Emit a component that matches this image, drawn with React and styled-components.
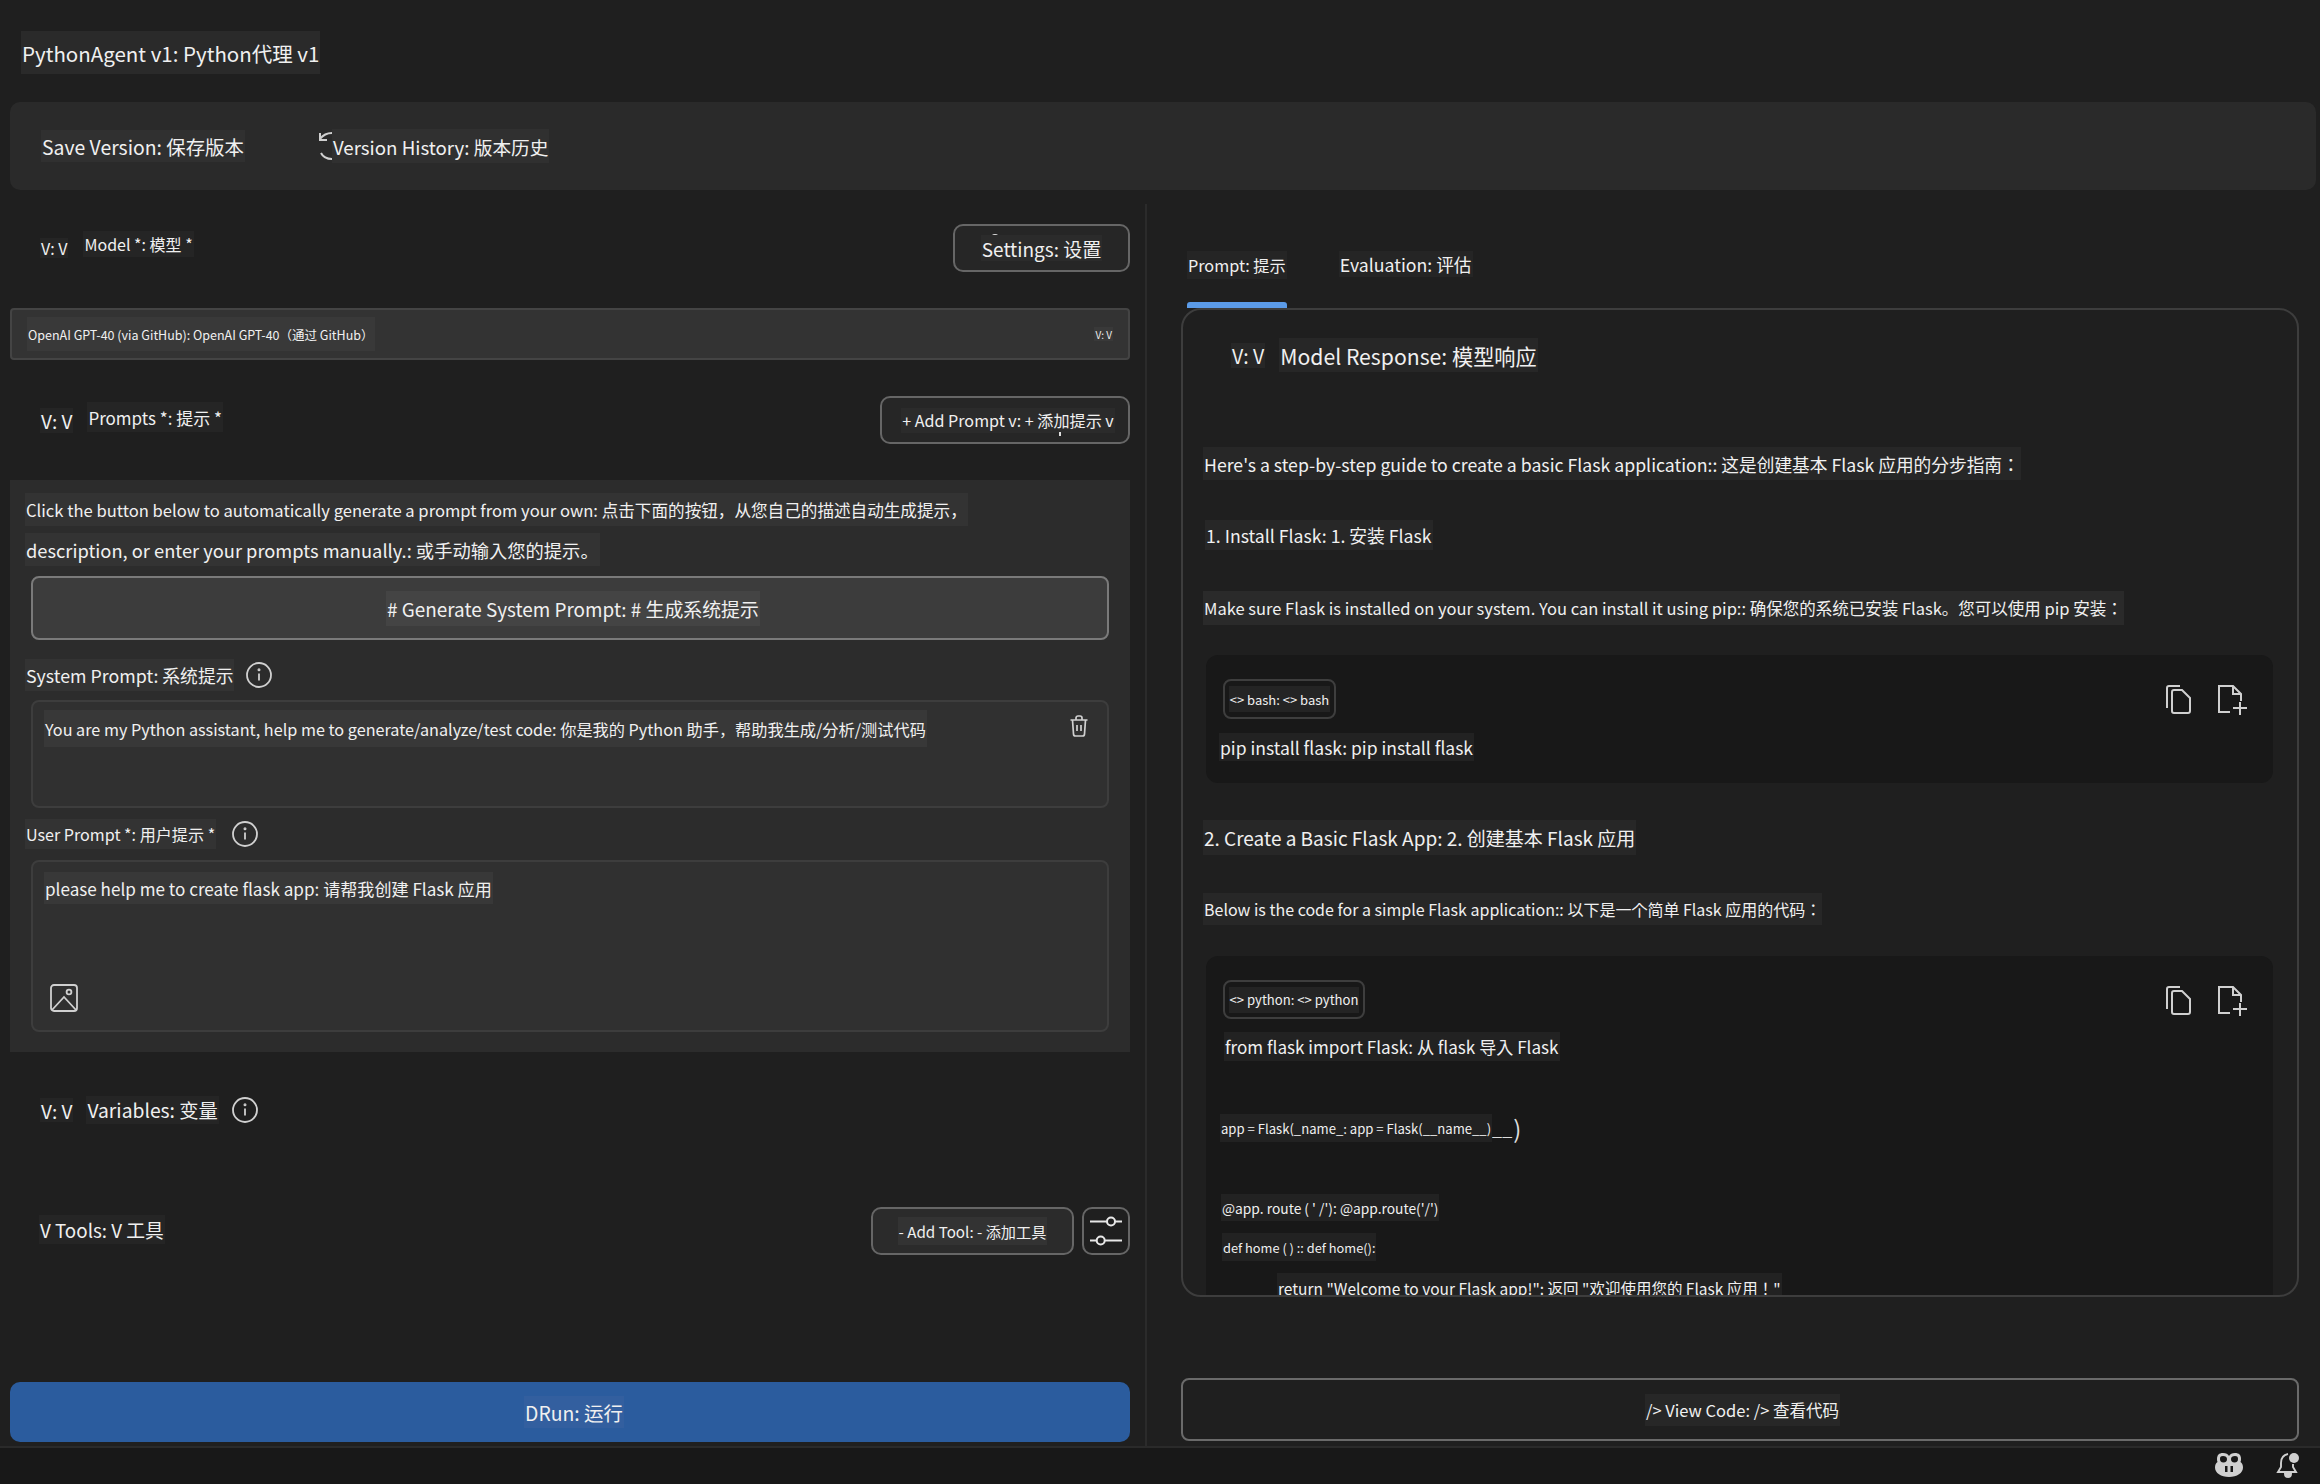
import React from "react";
import styled, { createGlobalStyle } from "styled-components";

const Global = createGlobalStyle`
  html, body { margin: 0; padding: 0; background: #1f1f1f; }
  * { box-sizing: border-box; }
  body { font-family: "Noto Sans CJK JP", "Noto Sans", sans-serif; color: #e6e6e6; }
`;

const Page = styled.div`
  width: 2320px; height: 1484px; display: flex; flex-direction: column; overflow: hidden; background: #1f1f1f;
`;
const Hl = styled.span`
  display: inline-flex; align-items: center; white-space: nowrap; flex: none; position: relative;
  height: ${p => p.$h || 30}px; font-size: ${p => p.$s || 18}px; background: ${p => p.$bg || "#292929"};
  padding: 0 1px; color: #f0f0f0; margin-bottom: ${p => p.$up || 0}px;
`;
const Header = styled.header`
  height: 102px; padding: 31px 0 0 21px; flex: none;
`;
const Toolbar = styled.div`
  flex: none; height: 88px; margin: 0 4px 0 10px; padding-left: 31px; background: #2a2a2a; border-radius: 10px;
  display: flex; align-items: center;
`;
const HistoryGroup = styled.div`
  display: flex; align-items: center; margin-left: 72px;
`;
const Main = styled.main`
  flex: none; margin-top: 14px; display: flex; height: 1242px;
`;
const LeftCol = styled.section`
  width: 1147px; flex: none; border-right: 2px solid #2b2b2b; padding: 20px 15px 4px 10px; display: flex; flex-direction: column;
`;
const RightCol = styled.section`
  flex: 1; padding: 0 21px 0 34px; display: flex; flex-direction: column;
`;
const Row = styled.div`
  display: flex; align-items: center; justify-content: space-between; height: 48px; flex: none; padding-left: 30px;
  margin-top: ${p => p.$mt || 0}px;
`;
const RowLeft = styled.div`
  display: flex; align-items: center; gap: ${p => p.$gap ?? 14}px;
`;
const RowRight = styled.div`
  display: flex; gap: 8px;
`;
const OutlineBtn = styled.button`
  height: 48px; width: ${p => p.$w}px; border: 2.5px solid #666; border-radius: 10px; background: ${p => p.$bg || "#262626"};
  display: flex; align-items: center; justify-content: center; padding: 0 0 0 ${p => p.$pl || 0}px; color: inherit; font: inherit; position: relative;
`;
const Peek = styled.span`
  position: absolute; left: ${p => p.$x}px; top: ${p => p.$y}px; width: 8px; height: 5px;
  border-top: 2px solid #ddd; border-left: 2px solid #ddd; border-right: 2px solid #ddd; border-radius: 4px 4px 0 0;
`;
const Dot = styled.span`
  position: absolute; left: 177px; bottom: 6px; width: 2px; height: 4px; background: #ddd;
`;
const SelectBox = styled.div`
  margin-top: 36px; height: 52px; flex: none; background: #333; border: 2px solid #444; border-radius: 4px;
  display: flex; align-items: center; justify-content: space-between; padding: 0 15px 0 15px;
`;
const PromptPanel = styled.div`
  margin-top: 36px; height: 572px; flex: none; background: #2c2c2c; padding: 13px 0 0 15px;
  display: flex; flex-direction: column; align-items: flex-start;
`;
const GenerateBtn = styled.button`
  margin: 10px 0 0 6px; width: 1078px; height: 64px; flex: none; background: #3c3c3c; border: 2.5px solid #7a7a7a; border-radius: 8px;
  display: flex; align-items: center; justify-content: center; color: inherit; font: inherit; padding: 0 0 0 6px;
`;
const LabelRow = styled.div`
  display: flex; align-items: center; gap: ${p => p.$gap}px; margin-top: ${p => p.$mt}px;
`;
const TextBox = styled.div`
  margin: ${p => p.$mt}px 0 0 6px; width: 1078px; height: ${p => p.$h}px; flex: none; background: #303030;
  border: 2px solid #3d3d3d; border-radius: 8px; padding: ${p => p.$pt}px 16px 0 11px; position: relative;
`;
const Overlay = styled.div`
  position: absolute; right: ${p => p.$r}px; ${p => p.$top !== undefined ? `top:${p.$top}px;` : ""} ${p => p.$bottom !== undefined ? `bottom:${p.$bottom}px;` : ""} display: flex;
`;
const RunBtn = styled.button`
  margin-top: auto; height: 60px; flex: none; background: #2b5c9e; border: 0; border-radius: 10px;
  display: flex; align-items: center; justify-content: center; color: inherit; font: inherit; padding: 0 0 0 8px; width: 1120px;
`;
const Tabs = styled.div`
  height: 104px; flex: none; display: flex; align-items: flex-start; gap: 52px; padding: 47px 0 0 6px;
`;
const Tab = styled.div`
  position: relative; height: 57px;
  &::after { content: ""; display: ${p => p.$active ? "block" : "none"}; position: absolute; left: 0; right: 0; bottom: 0; height: 6px; background: #5b9be8; border-radius: 3px 3px 0 0; }
`;
const ResponsePanel = styled.div`
  height: 989px; flex: none; border: 2px solid #3d3d3d; border-radius: 20px; overflow: hidden; padding: 28px 24px 0 20px;
  display: flex; flex-direction: column; align-items: flex-start;
`;
const ResponseHead = styled.div`
  display: flex; align-items: center; gap: 14px; padding-left: 28px; height: 34px; flex: none;
`;
const Para = styled.div`
  margin: ${p => p.$mt}px 0 0 ${p => p.$ml || 0}px; flex: none;
`;
const CodeBlock = styled.div`
  margin: ${p => p.$mt}px 0 0 3px; width: 1067px; background: #181818; border-radius: 12px; flex: none;
  padding: 24px 25px 22px 0; min-height: 128px;
`;
const CodeHead = styled.div`
  display: flex; justify-content: space-between; align-items: flex-start; padding-left: 17px;
`;
const Chip = styled.div`
  height: ${p => p.$h}px; width: ${p => p.$w}px; border: 2px solid #3e3e3e; border-radius: 8px; display: flex; align-items: center; justify-content: center;
`;
const CodeActions = styled.div`
  display: flex; gap: 26px; margin-top: 6px;
`;
const CodeLine = styled.div`
  margin: ${p => p.$mt}px 0 0 ${p => p.$ml}px; display: flex; align-items: center;
`;
const BigTail = styled.span`
  font-size: ${p => p.$s}px; line-height: 28px; color: #ddd; margin-left: ${p => p.$ml || 0}px;
`;
const ViewBtn = styled.button`
  margin-top: 81px; height: 63px; flex: none; background: #1f1f1f; border: 2.5px solid #6a6a6a; border-radius: 8px;
  display: flex; align-items: center; justify-content: center; color: inherit; font: inherit; padding: 0 0 0 5px; width: 100%;
`;
const StatusBar = styled.footer`
  flex: 1; background: #181818; border-top: 2px solid #2a2a2a; display: flex; justify-content: flex-end; align-items: center; gap: 32px; padding: 0 20px 2px 0;
`;

const C = "#d0d0d0";
const Info = () => (
  <svg width="26" height="26" viewBox="0 0 26 26" fill="none" stroke={C} strokeWidth="1.8">
    <circle cx="13" cy="13" r="12" /><path d="M13 11.5v7" /><circle cx="13" cy="7.8" r="0.6" fill={C} />
  </svg>
);
const Trash = () => (
  <svg width="20" height="22" viewBox="0 0 20 22" fill="none" stroke={C} strokeWidth="1.7">
    <path d="M1.5 5h17M7 5V3a2 2 0 0 1 2-2h2a2 2 0 0 1 2 2v2M3.5 5l1 14a2 2 0 0 0 2 2h7a2 2 0 0 0 2-2l1-14M8 10v6M12 10v6" />
  </svg>
);
const ImageIcon = () => (
  <svg width="28" height="28" viewBox="0 0 28 28" fill="none" stroke={C} strokeWidth="1.8">
    <rect x="1" y="1" width="26" height="26" rx="3" /><path d="M2 26 14 13l12 13" /><circle cx="19" cy="8" r="2.4" />
  </svg>
);
const History = () => (
  <svg width="30" height="30" viewBox="0 0 30 30" fill="none" stroke={C} strokeWidth="2" style={{ flex: "none", marginRight: -15 }}>
    <path d="M3 8c3-4 7-6 12-6 7 0 13 6 13 13s-6 13-13 13c-5 0-9-2-11-6" /><path d="M3 2v7h7" />
  </svg>
);
const Sliders = () => (
  <svg width="32" height="32" viewBox="0 0 32 32" fill="none" stroke="#e8e8e8" strokeWidth="2">
    <path d="M0 6.500h17M25 6.500h7M0 25.500h6.500M15 25.500h17" /><circle cx="21" cy="6.500" r="4" /><circle cx="10.700" cy="25.500" r="4" />
  </svg>
);
const Copy = () => (
  <svg width="26" height="30" viewBox="0 0 26 30" fill="none" stroke={C} strokeWidth="2">
    <path d="M14 1H3a2 2 0 0 0-2 2v20" /><path d="M6 7a2 2 0 0 1 2-2h8l8 8v13a2 2 0 0 1-2 2H8a2 2 0 0 1-2-2z" />
  </svg>
);
const NewFile = () => (
  <svg width="30" height="30" viewBox="0 0 30 30" fill="none" stroke={C} strokeWidth="2">
    <path d="M12 27H1V1h14l8 8v7" /><path d="M15 1v8h8M22 17v13M15 23h14" />
  </svg>
);
const Copilot = () => (
  <svg width="30" height="26" viewBox="0 0 30 26" fill={C}>
    <path fillRule="evenodd" d="M9 1c3 0 5 1 6 3 1-2 3-3 6-3 4 0 6 2 6 6 0 1 0 2-.5 3 1.700 1 2.500 3 2.500 5.500C29 21 23 25 15 25S1 21 1 15.500C1 13 1.800 11 3.500 10 3 9 3 8 3 7c0-4 2-6 6-6zM9 4C6.500 4 6 5 6 7s1 3.500 3.500 3.500S13 9 13 7s-1.500-3-4-3zm12 0c-2.500 0-4 1-4 3s1 3.500 3.500 3.500S24 9 24 7s-.5-3-3-3zM11 14v6h2.500v-6zm5.500 0v6H19v-6z" />
  </svg>
);
const Bell = () => (
  <svg width="24" height="26" viewBox="0 0 24 26" fill="none" stroke={C} strokeWidth="1.9">
    <path d="M12 2C7 3 5 7 5 11v4l-3 5h18l-3-5v-3" /><path d="M9 22a3 3 0 0 0 6 0z" fill={C} />
    <circle cx="18" cy="6" r="5" fill={C} stroke="none" />
  </svg>
);

export default function App() {
  return (
    <Page>
      <Global />
      <Header><Hl $h={43} $s={20.500} $bg="#2a2a2a">PythonAgent v1: Python代理 v1</Hl></Header>
      <Toolbar>
        <Hl $h={32} $s={19.400} $bg="#303030">Save Version: 保存版本</Hl>
        <HistoryGroup>
          <History />
          <Hl $h={34} $s={18.700} $bg="#303030">Version History: 版本历史</Hl>
        </HistoryGroup>
      </Toolbar>
      <Main>
        <LeftCol>
          <Row>
            <RowLeft $gap={15}>
              <Hl $h={20} $s={16} $bg="#252525">V: V</Hl>
              <Hl $h={26} $s={16} $bg="#252525" $up={8}>Model *: 模型 *</Hl>
            </RowLeft>
            <OutlineBtn $w={177}>
              <Peek $x={36} $y={8} />
              <Hl $h={26} $s={19} $bg="#2b2b2b">Settings: 设置</Hl>
            </OutlineBtn>
          </Row>
          <SelectBox>
            <Hl $h={34} $s={12.500} $bg="#393939">OpenAI GPT-40 (via GitHub): OpenAI GPT-40（通过 GitHub）</Hl>
            <Hl $h={14} $s={10} $bg="#393939">V: V</Hl>
          </SelectBox>
          <Row $mt={36}>
            <RowLeft>
              <Hl $h={25} $s={19} $bg="#252525">V: V</Hl>
              <Hl $h={30} $s={17} $bg="#252525" $up={6}>Prompts *: 提示 *</Hl>
            </RowLeft>
            <OutlineBtn $w={250} $pl={6}>
              <Hl $h={25} $s={16.100} $bg="#2b2b2b">+ Add Prompt v: + 添加提示 v</Hl>
              <Dot />
            </OutlineBtn>
          </Row>
          <PromptPanel>
            <Hl $h={33} $s={16.600} $bg="#333">Click the button below to automatically generate a prompt from your own: 点击下面的按钮，从您自己的描述自动生成提示，</Hl>
            <Hl $h={33} $s={18.300} $bg="#333" style={{ marginTop: 7 }}>description, or enter your prompts manually.: 或手动输入您的提示。</Hl>
            <GenerateBtn><Hl $h={35} $s={18.900} $bg="#444"># Generate System Prompt: # 生成系统提示</Hl></GenerateBtn>
            <LabelRow $mt={19} $gap={12}>
              <Hl $h={32} $s={17.800} $bg="#333">System Prompt: 系统提示</Hl>
              <Info />
            </LabelRow>
            <TextBox $mt={9} $h={108} $pt={8}>
              <Hl $h={37} $s={16.200} $bg="#383838">You are my Python assistant, help me to generate/analyze/test code: 你是我的 Python 助手，帮助我生成/分析/测试代码</Hl>
              <Overlay $r={18} $top={13}><Trash /></Overlay>
            </TextBox>
            <LabelRow $mt={11} $gap={16}>
              <Hl $h={30} $s={16.100} $bg="#333">User Prompt *: 用户提示 *</Hl>
              <Info />
            </LabelRow>
            <TextBox $mt={11} $h={172} $pt={10}>
              <Hl $h={32} $s={17.100} $bg="#383838">please help me to create flask app: 请帮我创建 Flask 应用</Hl>
              <Overlay $r={1029} $bottom={18}><ImageIcon /></Overlay>
            </TextBox>
          </PromptPanel>
          <Row $mt={34}>
            <RowLeft $gap={13}>
              <Hl $h={24} $s={19} $bg="#252525">V: V</Hl>
              <Hl $h={28} $s={19.300} $bg="#252525">Variables: 变量</Hl>
              <Info />
            </RowLeft>
          </Row>
          <Row $mt={73}>
            <RowLeft style={{ marginLeft: -1 }}>
              <Hl $h={29} $s={18.800} $bg="#252525" $up={3}>V Tools: V 工具</Hl>
            </RowLeft>
            <RowRight>
              <OutlineBtn $w={203} $bg="#2b2b2b"><Hl $h={28} $s={15.200} $bg="#333">- Add Tool: - 添加工具</Hl></OutlineBtn>
              <OutlineBtn $w={48} $bg="#1f1f1f"><Sliders /></OutlineBtn>
            </RowRight>
          </Row>
          <RunBtn><Hl $h={32} $s={19.400} $bg="#335f9f">DRun: 运行</Hl></RunBtn>
        </LeftCol>
        <RightCol>
          <Tabs>
            <Tab $active><Hl $h={28} $s={16.200} $bg="#252525">Prompt: 提示</Hl></Tab>
            <Tab><Hl $h={26} $s={17.700} $bg="#252525">Evaluation: 评估</Hl></Tab>
          </Tabs>
          <ResponsePanel>
            <ResponseHead>
              <Hl $h={25} $s={19.500} $bg="#272727">V: V</Hl>
              <Hl $h={34} $s={21.200} $bg="#272727">Model Response: 模型响应</Hl>
            </ResponseHead>
            <Para $mt={75}><Hl $h={33} $s={17.700} $bg="#272727">Here's a step-by-step guide to create a basic Flask application:: 这是创建基本 Flask 应用的分步指南：</Hl></Para>
            <Para $mt={40} $ml={2}><Hl $h={30} $s={17.700} $bg="#272727">1. Install Flask: 1. 安装 Flask</Hl></Para>
            <Para $mt={41}><Hl $h={34} $s={16.500} $bg="#2a2a2a">Make sure Flask is installed on your system. You can install it using pip:: 确保您的系统已安装 Flask。您可以使用 pip 安装：</Hl></Para>
            <CodeBlock $mt={30}>
              <CodeHead>
                <Chip $w={113} $h={40}><Hl $h={26} $s={13} $bg="#242424">&lt;&gt; bash: &lt;&gt; bash</Hl></Chip>
                <CodeActions><Copy /><NewFile /></CodeActions>
              </CodeHead>
              <CodeLine $mt={14} $ml={13}><Hl $h={28} $s={17.500} $bg="#222">pip install flask: pip install flask</Hl></CodeLine>
            </CodeBlock>
            <Para $mt={37}><Hl $h={35} $s={19} $bg="#272727">2. Create a Basic Flask App: 2. 创建基本 Flask 应用</Hl></Para>
            <Para $mt={38}><Hl $h={32} $s={16} $bg="#272727">Below is the code for a simple Flask application:: 以下是一个简单 Flask 应用的代码：</Hl></Para>
            <CodeBlock $mt={31}>
              <CodeHead>
                <Chip $w={142} $h={39}><Hl $h={26} $s={13.100} $bg="#242424">&lt;&gt; python: &lt;&gt; python</Hl></Chip>
                <CodeActions><Copy /><NewFile /></CodeActions>
              </CodeHead>
              <CodeLine $mt={13} $ml={18}><Hl $h={29} $s={17.100} $bg="#222">from flask import Flask: 从 flask 导入 Flask</Hl></CodeLine>
              <CodeLine $mt={53} $ml={14}>
                <Hl $h={28} $s={13.100} $bg="#222">app = Flask(_name_: app = Flask(__name__)</Hl>
                <BigTail $s={18}>__</BigTail><BigTail $s={24} $ml={1}>)</BigTail>
              </CodeLine>
              <CodeLine $mt={52} $ml={15}><Hl $h={27} $s={13.800} $bg="#222">@app. route ( ' /'): @app.route('/')</Hl></CodeLine>
              <CodeLine $mt={12} $ml={16}><Hl $h={28} $s={12.800} $bg="#222">def home ( ) :: def home():</Hl></CodeLine>
              <CodeLine $mt={12} $ml={71}><Hl $h={29} $s={15.500} $bg="#222">return "Welcome to vour Flask app!": 返回 "欢迎使用您的 Flask 应用！"</Hl></CodeLine>
            </CodeBlock>
          </ResponsePanel>
          <ViewBtn><Hl $h={32} $s={16.500} $bg="#272727">/&gt; View Code: /&gt; 查看代码</Hl></ViewBtn>
        </RightCol>
      </Main>
      <StatusBar><Copilot /><Bell /></StatusBar>
    </Page>
  );
}
